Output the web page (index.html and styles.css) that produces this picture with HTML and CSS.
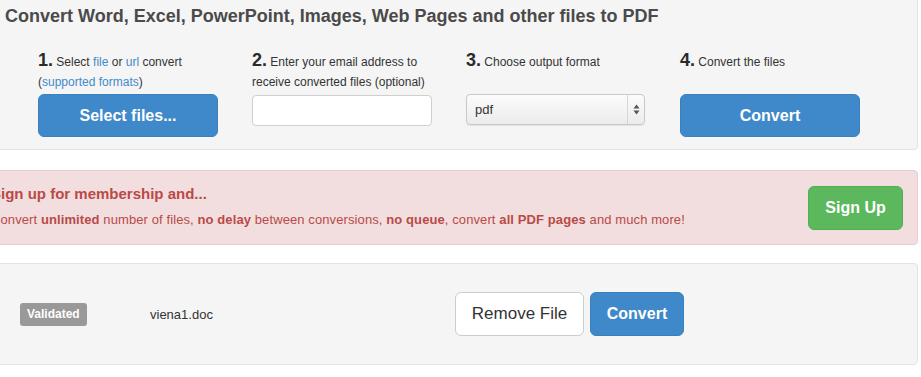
FILE: index.html
```html
<!DOCTYPE html>
<html lang="en">
<head>
<meta charset="utf-8">
<title>Convert to PDF</title>
<link rel="stylesheet" href="styles.css">
</head>
<body>
<div class="page">
  <section class="panel">
    <h1 class="title">Convert Word, Excel, PowerPoint, Images, Web Pages and other files to PDF</h1>
    <div class="steps">
      <div class="step">
        <div class="label"><span class="num">1.</span> Select <a href="#">file</a> or <a href="#">url</a> convert<br>(<a href="#">supported formats</a>)</div>
        <button class="btn btn-primary btn-lg">Select files...</button>
      </div>
      <div class="step">
        <div class="label"><span class="num">2.</span> Enter your email address to<br>receive converted files (optional)</div>
        <input class="email" type="text">
      </div>
      <div class="step">
        <div class="label"><span class="num">3.</span> Choose output format</div>
        <div class="select">
          <span class="select-value">pdf</span>
          <span class="select-arrows">
            <svg width="7" height="11" viewBox="0 0 7 11"><path d="M3.5 0.5 L6.5 4.5 L0.5 4.5 Z" fill="#555"/><path d="M3.5 10.5 L6.5 6.5 L0.5 6.5 Z" fill="#555"/></svg>
          </span>
        </div>
      </div>
      <div class="step">
        <div class="label"><span class="num">4.</span> Convert the files</div>
        <button class="btn btn-primary btn-lg">Convert</button>
      </div>
    </div>
  </section>

  <section class="alert">
    <div class="alert-text">
      <h2 class="alert-heading">Sign up for membership and...</h2>
      <p class="alert-body">Convert <b>unlimited</b> number of files, <b>no delay</b> between conversions, <b>no queue</b>, convert <b>all PDF pages</b> and much more!</p>
    </div>
    <button class="btn btn-success btn-lg">Sign Up</button>
  </section>

  <section class="well">
    <div class="file-row">
      <span class="badge">Validated</span>
      <span class="filename">viena1.doc</span>
      <div class="actions">
        <button class="btn btn-default">Remove File</button>
        <button class="btn btn-primary">Convert</button>
      </div>
    </div>
  </section>
</div>
</body>
</html>
```

FILE: styles.css
```css
html, body {
  margin: 0;
  padding: 0;
  background: #ffffff;
  overflow: hidden;
}
body {
  font-family: "Liberation Sans", Arial, sans-serif;
  color: #333333;
}
.page {
  margin-left: -25px;
  width: 943px;
}
a {
  color: #428bca;
  text-decoration: none;
}

/* top panel */
.panel {
  margin-top: -1px;
  background: #f5f5f5;
  border: 1px solid #e3e3e3;
  border-radius: 0 0 4px 0;
  padding: 6px 0 12px;
}
.title {
  margin: 0;
  padding-left: 29px;
  font-size: 18px;
  line-height: 20px;
  font-weight: bold;
  color: #4a4a4a;
}
.steps {
  margin-top: 24px;
  padding-left: 62px;
  display: grid;
  grid-template-columns: repeat(4, 214px);
}
.step {
  display: flex;
  flex-direction: column;
}
.label {
  height: 40px;
  margin-bottom: 4px;
  font-size: 12px;
  line-height: 20px;
  color: #333;
}
.num {
  font-size: 18px;
  font-weight: bold;
  color: #2b2b2b;
}

/* buttons */
.btn {
  font-family: "Liberation Sans", Arial, sans-serif;
  border: 1px solid transparent;
  border-radius: 6px;
  cursor: pointer;
  box-sizing: border-box;
  padding: 0;
}
.btn-lg {
  width: 180px;
  height: 43px;
  font-size: 16px;
  font-weight: bold;
}
.btn-primary {
  background: #3f89ca;
  border-color: #3a80bd;
  color: #ffffff;
}
.btn-success {
  background: #5cb85c;
  border-color: #52ae52;
  color: #ffffff;
  width: 95px;
  height: 44px;
}

.email {
  box-sizing: border-box;
  width: 180px;
  height: 31px;
  margin: 1px 0 0;
  border: 1px solid #cfcfcf;
  border-radius: 4px;
  background: #ffffff;
}

.select {
  box-sizing: border-box;
  width: 179px;
  height: 31px;
  border: 1px solid #c9c9c9;
  border-radius: 4px;
  background: linear-gradient(#fbfbfb, #ececec);
  box-shadow: 0 1px 1px rgba(0,0,0,0.08);
  display: flex;
  align-items: center;
}
.select-value {
  flex: 1;
  padding-left: 8px;
  font-size: 13px;
  color: #333;
}
.select-arrows {
  width: 16px;
  height: 100%;
  border-left: 1px solid #d6d6d6;
  display: flex;
  align-items: center;
  justify-content: center;
}

/* alert */
.alert {
  margin-top: 20px;
  background: #f2dede;
  border: 1px solid #ebccd1;
  border-radius: 4px;
  height: 75px;
  box-sizing: border-box;
  padding: 0 14px 0 15px;
  display: flex;
  align-items: center;
  justify-content: space-between;
  color: #b94a48;
}
.alert-text {
  margin-bottom: 2px;
}
.alert-heading {
  margin: 0 0 5px;
  font-size: 15px;
  line-height: 20px;
  font-weight: bold;
  color: #b94a48;
}
.alert-body {
  margin: 0;
  font-size: 13px;
  line-height: 21px;
  letter-spacing: 0.1px;
}
.alert-body b {
  font-weight: bold;
}

/* bottom well */
.well {
  margin-top: 18px;
  background: #f5f5f5;
  border: 1px solid #e3e3e3;
  border-radius: 4px;
  height: 102px;
  box-sizing: border-box;
  display: flex;
  align-items: center;
}
.file-row {
  padding-left: 44px;
  display: grid;
  grid-template-columns: 130px 305px auto;
  align-items: center;
}
.badge {
  justify-self: start;
  background: #999999;
  color: #ffffff;
  font-size: 12px;
  font-weight: bold;
  line-height: 23px;
  height: 23px;
  padding: 0 7px;
  border-radius: 3px;
}
.filename {
  font-size: 13px;
  color: #333;
}
.actions {
  display: flex;
  gap: 6px;
}
.actions .btn {
  height: 44px;
  font-size: 16px;
}
.btn-default {
  width: 129px;
  background: #ffffff;
  border-color: #cccccc;
  color: #333333;
  font-size: 17px !important;
}
.actions .btn-primary {
  width: 94px;
  font-weight: bold;
}
```
